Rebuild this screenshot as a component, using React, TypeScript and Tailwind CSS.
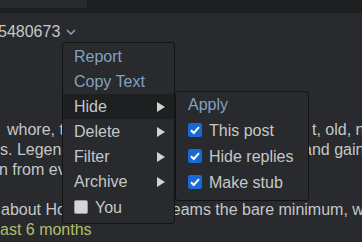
import React from 'react'

const LINK = 'text-[#81a2be]'

function Arrow() {
  return (
    <svg width="8" height="10" viewBox="0 0 8 10" className="ml-auto">
      <polygon points="0,0 8,5 0,10" fill="#d2d4d3" />
    </svg>
  )
}

function Box({ checked }: { checked?: boolean }) {
  if (!checked) {
    return <span className="w-[14px] h-[14px] shrink-0 rounded-[2px] bg-[#d6d6d6] border border-[#9b9b9b]" />
  }
  return (
    <span className="w-[14px] h-[14px] shrink-0 rounded-[2px] bg-[#1769d4] flex items-center justify-center">
      <svg width="14" height="14" viewBox="0 0 14 14">
        <polyline points="3,7.2 5.8,10 11,4.2" fill="none" stroke="#fff" strokeWidth="2" />
      </svg>
    </span>
  )
}

const SUBMENU = ['Delete', 'Filter', 'Archive']

export default function App() {
  return (
    <div className="relative w-[362px] h-[242px] overflow-hidden bg-[#282a2e] text-[16px] text-[#c5c8c6] font-['Liberation_Sans',Arial,sans-serif]">
      {/* header strip */}
      <div className="h-[13px] bg-[#1d1f21]">
        <div className="w-[87px] h-[8px] bg-[#282a2e]" />
      </div>

      {/* post number */}
      <div className="flex items-center -ml-[2px] mt-[9px] leading-[19.5px] whitespace-nowrap">
        <span>5480673</span>
        <svg width="10" height="6" viewBox="0 0 10 6" className="ml-[6px] mt-[1px]">
          <polyline points="1,1 5,5 9,1" fill="none" stroke="#81a2be" strokeWidth="1.5" />
        </svg>
      </div>

      {/* comment */}
      <div className="mt-[78px] leading-[20px] whitespace-nowrap">
        <div className="flex">
          <span className="w-[312px] shrink-0 overflow-hidden pl-[7px]">whore, the one that spent years being</span>
          <span className="shrink-0">t, old, n</span>
        </div>
        <div className="flex">
          <span className="w-[303px] shrink-0 overflow-hidden">s. Legendary streamer with fans that love her</span>
          <span className="shrink-0">and gaining</span>
        </div>
        <div className="-ml-[1px]">n from every corner of the site</div>
        <div>&nbsp;</div>
        <div className="flex">
          <span className="w-[154px] shrink-0 overflow-hidden pl-[1px]">about Hololive when she</span>
          <span className="shrink-0">streams the bare minimum, w</span>
        </div>
        <div className="text-[#b5bd68]">ast 6 months</div>
      </div>

      {/* menu */}
      <div className="absolute left-[62px] top-[42px] w-[113px] bg-[#282a2e] border border-[#121314] rounded-[3px] pt-[1px] pb-[3px] leading-[19px]">
        <div className={`h-[25px] flex items-center pl-[11px] ${LINK}`}>Report</div>
        <div className={`h-[25px] flex items-center pl-[11px] ${LINK}`}>Copy Text</div>
        <div className="h-[25px] flex items-center pl-[11px] pr-[9px] bg-[#1d1f21]">
          Hide
          <Arrow />
        </div>
        {SUBMENU.map((label) => (
          <div key={label} className="h-[25px] flex items-center pl-[11px] pr-[9px]">
            {label}
            <Arrow />
          </div>
        ))}
        <div className="h-[26px] flex items-center pl-[11px] gap-[7px]">
          <Box />
          You
        </div>

        {/* hide submenu */}
        <div className="absolute left-[112px] top-[48px] w-[134px] bg-[#282a2e] border border-[#121314] rounded-[3px] pb-[5px]">
          <div className={`h-[25px] flex items-center pl-[12px] ${LINK}`}>Apply</div>
          {['This post', 'Hide replies', 'Make stub'].map((label) => (
            <div key={label} className="h-[26px] flex items-center pl-[12px] gap-[7px]">
              <Box checked />
              {label}
            </div>
          ))}
        </div>
      </div>
    </div>
  )
}
